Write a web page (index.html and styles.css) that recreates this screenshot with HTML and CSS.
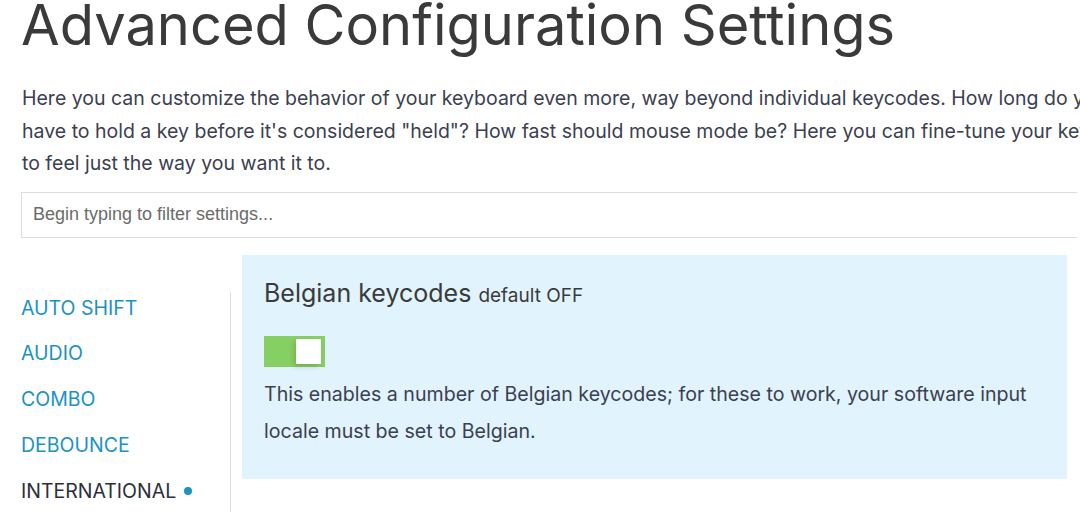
FILE: index.html
```html
<!DOCTYPE html>
<html lang="en">
<head>
<meta charset="utf-8">
<title>Advanced Configuration Settings</title>
<link rel="stylesheet" href="styles.css">
</head>
<body>
<main class="page">
  <h1 class="title">Advanced Configuration Settings</h1>
  <p class="intro">Here you can customize the behavior of your keyboard even more, way beyond individual keycodes. How long do you have to hold a key before it's considered "held"? How fast should mouse mode be? Here you can fine-tune your keyboard to feel just the way you want it to.</p>
  <input class="filter" type="text" placeholder="Begin typing to filter settings...">
  <div class="layout">
    <nav class="sidebar">
      <a class="nav-item">AUTO SHIFT</a>
      <a class="nav-item">AUDIO</a>
      <a class="nav-item">COMBO</a>
      <a class="nav-item">DEBOUNCE</a>
      <a class="nav-item active">INTERNATIONAL <span class="dot"></span></a>
    </nav>
    <section class="panel">
      <h2 class="setting-title">Belgian keycodes <span class="default">default OFF</span></h2>
      <div class="toggle on"><span class="knob"></span></div>
      <p class="setting-desc">This enables a number of Belgian keycodes; for these to work, your software input locale must be set to Belgian.</p>
    </section>
  </div>
</main>
</body>
</html>
```

FILE: styles.css
```css
html, body {
  margin: 0;
  padding: 0;
  overflow: hidden;
  background: #ffffff;
}
body {
  font-family: Inter, "Noto Sans", sans-serif;
  width: 1080px;
  height: 524px;
}
.page {
  width: 1180px;
  padding: 0 0 0 21px;
}
.title {
  margin: -3px 0 0 0;
  font-size: 56px;
  line-height: 56px;
  font-weight: 400;
  color: #3a3a3a;
}
.intro {
  margin: 29px 0 0 1px;
  width: 1130px;
  font-size: 19.5px;
  line-height: 32.5px;
  color: #3b4050;
}
.filter {
  display: block;
  box-sizing: border-box;
  margin: 12px 0 0 0;
  width: 1056px;
  height: 46px;
  padding: 0 11px;
  border: 1px solid #dedede;
  border-right: none;
  font-family: "Liberation Sans", Arial, sans-serif;
  font-size: 18px;
  color: #333;
  outline: none;
}
.filter::placeholder {
  color: #6b6b6b;
}
.layout {
  display: flex;
  margin-top: 17px;
}
.sidebar {
  box-sizing: border-box;
  width: 210px;
  height: 220px;
  margin-top: 37px;
  padding-top: 4px;
  border-right: 1px solid #dcdcdc;
  display: flex;
  flex-direction: column;
  gap: 21.75px;
}
.nav-item {
  display: flex;
  align-items: center;
  gap: 8px;
  font-size: 19.5px;
  line-height: 24px;
  height: 24px;
  color: #1b92c4;
}
.nav-item.active {
  color: #2c2f3a;
}
.dot {
  width: 8px;
  height: 8px;
  border-radius: 50%;
  background: #1b92c4;
}
.panel {
  margin-left: 11px;
  width: 825px;
  height: 224px;
  box-sizing: border-box;
  background: #e1f3fd;
  padding: 24px 22px;
}
.setting-title {
  margin: 0;
  font-size: 25px;
  line-height: 28px;
  font-weight: 400;
  color: #3a3a3a;
}
.default {
  font-size: 19px;
}
.toggle {
  margin-top: 26px;
  width: 61px;
  height: 31px;
  background: #86cf63;
  position: relative;
}
.knob {
  position: absolute;
  left: 32px;
  top: 3px;
  width: 25px;
  height: 25px;
  background: #ffffff;
  box-shadow: -2px 3px 5px rgba(0,0,0,0.15);
}
.setting-desc {
  margin: 9.5px 0 0 0;
  font-size: 19.6px;
  line-height: 37px;
  color: #3b4050;
}
```
